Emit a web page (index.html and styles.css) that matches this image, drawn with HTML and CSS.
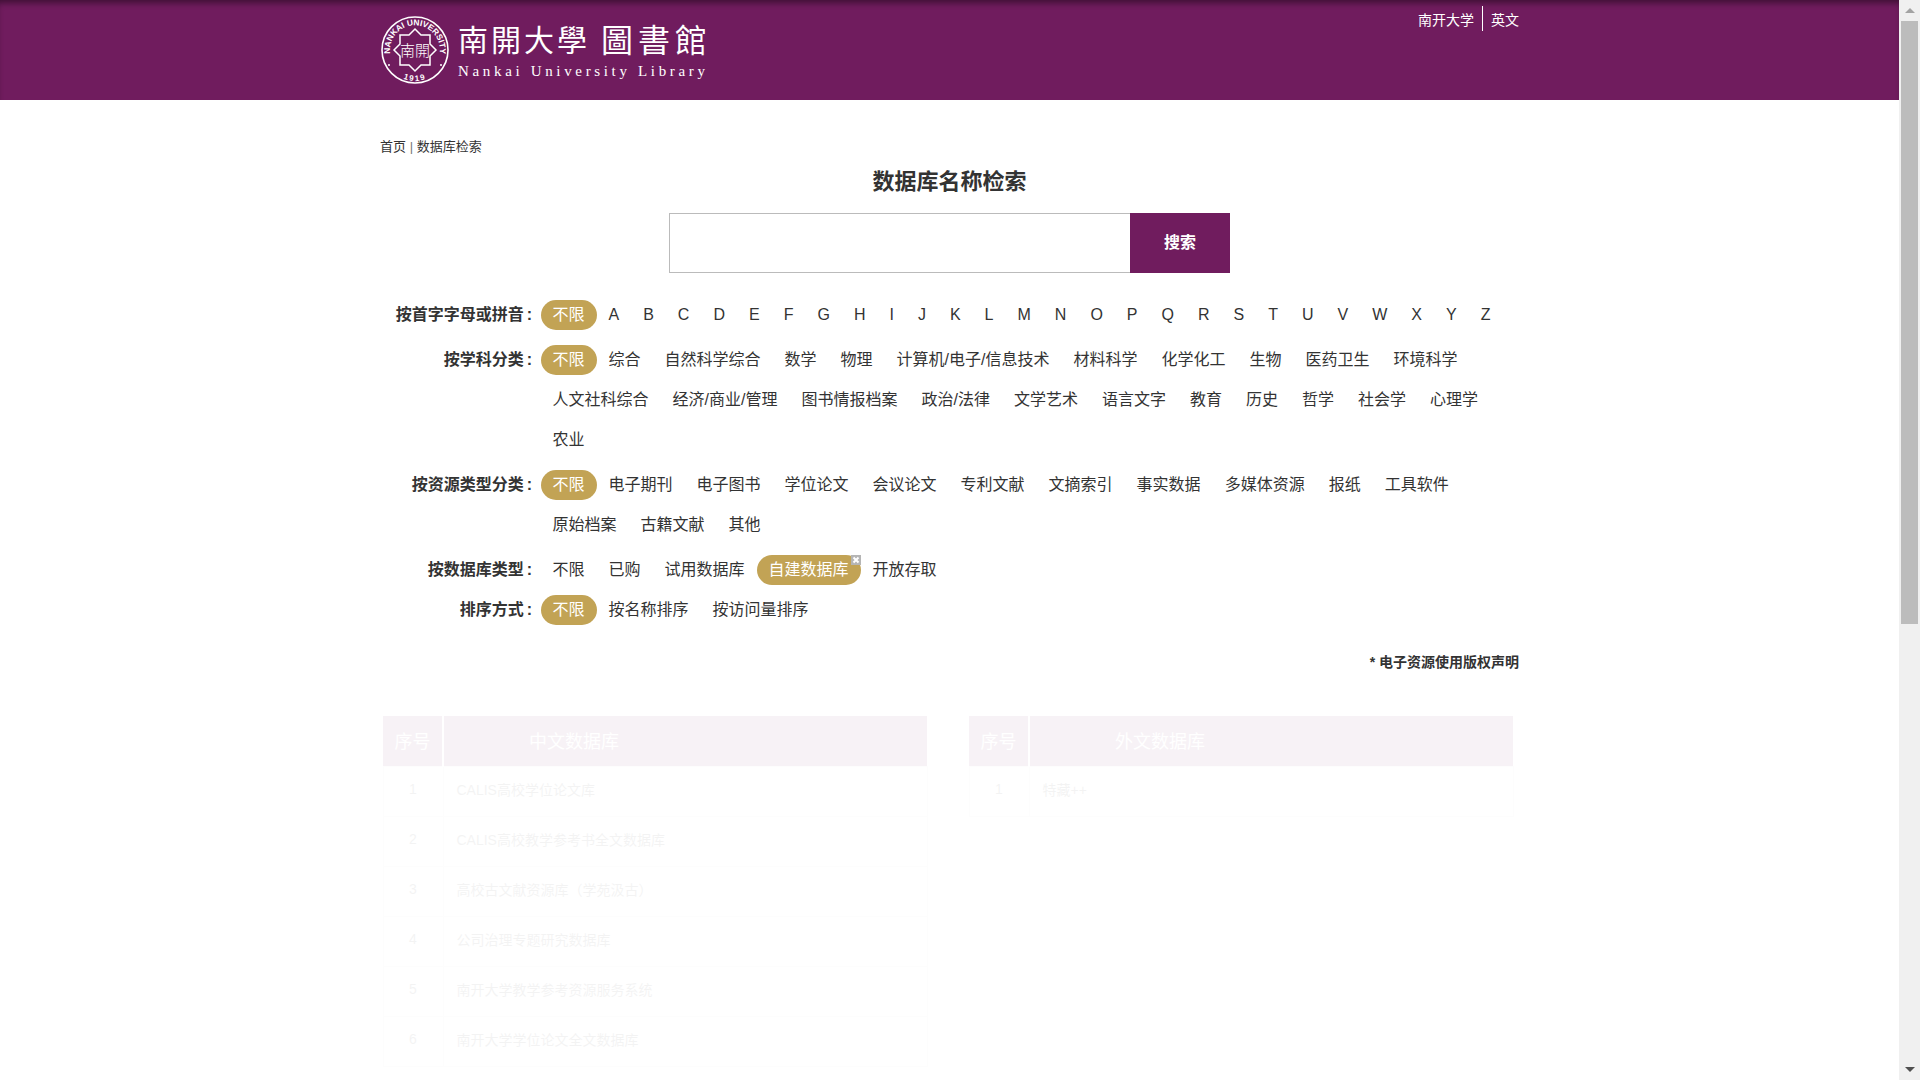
FILE: index.html
```html
<!DOCTYPE html>
<html lang="zh-CN">
<head>
    <meta charset="UTF-8">
    <meta name="viewport" content="width=device-width, initial-scale=1.0">
    <title>数据库名称检索</title>
    <link rel="stylesheet" href="styles.css">
</head>
<body>
    <div class="page">
        <header class="top-bar">
            <div class="wrap top-inner">
                <a class="logo" href="#">
                    <svg class="seal" width="70" height="70" viewBox="0 0 70 70">
                        <defs>
                            <path id="sealTop" d="M10.2 38.5 A25 25 0 1 1 59.8 38.5"/>
                            <path id="sealBottom" d="M14 57.8 A31 31 0 0 0 56 57.8"/>
                        </defs>
                        <circle cx="35" cy="35" r="33" fill="none" stroke="#fff" stroke-width="1.6"/>
                        <polygon points="35,14 41,20 50,20 50,29 56,35 50,41 50,50 41,50 35,56 29,50 20,50 20,41 14,35 20,29 20,20 29,20" fill="none" stroke="#fff" stroke-width="1.5"/>
                        <circle cx="9" cy="50" r="1" fill="#fff"/>
                        <circle cx="61" cy="50" r="1" fill="#fff"/>
                        <text class="seal-ring"><textPath href="#sealTop" startOffset="50%" text-anchor="middle">NANKAI UNIVERSITY</textPath></text>
                        <text class="seal-year"><textPath href="#sealBottom" startOffset="50%" text-anchor="middle">1919</textPath></text>
                        <text class="seal-mid" x="35" y="41" text-anchor="middle">南開</text>
                    </svg>
                    <div class="logo-text">
                        <div class="logo-cn"><span>南開大學</span><span>圖書館</span></div>
                        <div class="logo-en">Nankai University Library</div>
                    </div>
                </a>
                <div class="top-links">
                    <a href="#">南开大学</a>
                    <a href="#">英文</a>
                </div>
            </div>
        </header>

        <main class="wrap content">
            <div class="crumb"><a href="#">首页</a> <i>|</i> <a href="#">数据库检索</a></div>
            <h1 class="title">数据库名称检索</h1>
            <div class="search">
                <input class="search-input" type="text">
                <button class="search-btn">搜索</button>
            </div>

            <div class="filter">
                <div class="filter-label">按首字字母或拼音<span>:</span></div>
                <ul class="filter-list">
                    <li class="on">不限</li><li>A</li><li>B</li><li>C</li><li>D</li><li>E</li><li>F</li><li>G</li><li>H</li><li>I</li><li>J</li><li>K</li><li>L</li><li>M</li><li>N</li><li>O</li><li>P</li><li>Q</li><li>R</li><li>S</li><li>T</li><li>U</li><li>V</li><li>W</li><li>X</li><li>Y</li><li>Z</li>
                </ul>
            </div>
            <div class="filter">
                <div class="filter-label">按学科分类<span>:</span></div>
                <ul class="filter-list">
                    <li class="on">不限</li><li>综合</li><li>自然科学综合</li><li>数学</li><li>物理</li><li>计算机/电子/信息技术</li><li>材料科学</li><li>化学化工</li><li>生物</li><li>医药卫生</li><li>环境科学</li><li>人文社科综合</li><li>经济/商业/管理</li><li>图书情报档案</li><li>政治/法律</li><li>文学艺术</li><li>语言文字</li><li>教育</li><li>历史</li><li>哲学</li><li>社会学</li><li>心理学</li><li>农业</li>
                </ul>
            </div>
            <div class="filter">
                <div class="filter-label">按资源类型分类<span>:</span></div>
                <ul class="filter-list">
                    <li class="on">不限</li><li>电子期刊</li><li>电子图书</li><li>学位论文</li><li>会议论文</li><li>专利文献</li><li>文摘索引</li><li>事实数据</li><li>多媒体资源</li><li>报纸</li><li>工具软件</li><li>原始档案</li><li>古籍文献</li><li>其他</li>
                </ul>
            </div>
            <div class="filter filter-tight">
                <div class="filter-label">按数据库类型<span>:</span></div>
                <ul class="filter-list">
                    <li>不限</li><li>已购</li><li>试用数据库</li><li class="on">自建数据库<span class="close">
                        <svg width="10" height="10" viewBox="0 0 10 10"><path d="M2.5 2.5 L7.5 7.5 M7.5 2.5 L2.5 7.5" stroke="#fff" stroke-width="2"/></svg>
                    </span></li><li>开放存取</li>
                </ul>
            </div>
            <div class="filter">
                <div class="filter-label">排序方式<span>:</span></div>
                <ul class="filter-list">
                    <li class="on">不限</li><li>按名称排序</li><li>按访问量排序</li>
                </ul>
            </div>

            <div class="notice"><a href="#">* 电子资源使用版权声明</a></div>

            <!-- tables are mid fade-in in the reference -->
            <div class="tables">
                <table class="db-table">
                    <thead><tr><th>序号</th><th>中文数据库</th></tr></thead>
                    <tbody>
                        <tr><td>1</td><td>CALIS高校学位论文库</td></tr>
                        <tr><td>2</td><td>CALIS高校教学参考书全文数据库</td></tr>
                        <tr><td>3</td><td>高校古文献资源库（学苑汲古）</td></tr>
                        <tr><td>4</td><td>公司治理专题研究数据库</td></tr>
                        <tr><td>5</td><td>南开大学教学参考资源服务系统</td></tr>
                        <tr><td>6</td><td>南开大学学位论文全文数据库</td></tr>
                    </tbody>
                </table>
                <table class="db-table">
                    <thead><tr><th>序号</th><th>外文数据库</th></tr></thead>
                    <tbody>
                        <tr><td>1</td><td>特藏++</td></tr>
                    </tbody>
                </table>
            </div>
        </main>
    </div>

    <div class="scrollbar">
        <div class="arrow arrow-up"></div>
        <div class="thumb"></div>
        <div class="track"></div>
        <div class="arrow arrow-down"></div>
    </div>
</body>
</html>
```

FILE: styles.css
```css
* {
    box-sizing: border-box;
}
html, body {
    height: 100%;
}
body {
    margin: 0;
    display: flex;
    overflow: hidden;
    background-color: #fff;
    color: #333;
    font-family: "Liberation Sans", "Noto Sans CJK SC", sans-serif;
    font-size: 16px;
}
a {
    color: inherit;
    text-decoration: none;
}
.page {
    flex: 1;
    min-width: 0;
    height: 100%;
    overflow: hidden;
}
.wrap {
    width: 1139px;
    margin: 0 auto;
}

/* header */
.top-bar {
    height: 100px;
    background-color: #701c5e;
    box-shadow: inset 0 6px 6px -3px rgba(0, 0, 0, 0.45);
}
.top-inner {
    display: flex;
    justify-content: space-between;
    align-items: flex-start;
}
.logo {
    display: flex;
    margin-top: 15px;
    color: #fff;
}
.seal {
    display: block;
}
.seal-ring {
    fill: #fff;
    font-size: 8.4px;
    font-weight: bold;
}
.seal-year {
    fill: #fff;
    font-size: 8px;
    font-weight: bold;
    letter-spacing: 1.5px;
}
.seal-mid {
    fill: #fff;
    font-family: "Noto Sans CJK TC", sans-serif;
    font-size: 15px;
    font-weight: 300;
}
.logo-text {
    margin-left: 8px;
}
.logo-cn {
    display: flex;
    align-items: center;
    gap: 11px;
    height: 46px;
    font-family: "Noto Sans CJK TC", sans-serif;
    line-height: 46px;
}
.logo-cn span:first-child {
    font-size: 30px;
    letter-spacing: 3px;
}
.logo-cn span:last-child {
    font-size: 32px;
    letter-spacing: 5px;
}
.logo-en {
    font-family: "Liberation Serif", serif;
    font-size: 15px;
    letter-spacing: 3.66px;
    line-height: 20px;
}
.top-links {
    display: flex;
    align-items: center;
    height: 25px;
    margin-top: 8px;
    padding-bottom: 4px;
    color: #fff;
    font-size: 14px;
}
.top-links a:first-child {
    position: relative;
    padding-right: 9px;
    margin-right: 8px;
}
/* divider sits a little below the text line */
.top-links a:first-child::after {
    content: "";
    position: absolute;
    top: -3px;
    right: 0;
    width: 1px;
    height: 25px;
    background-color: #fff;
}

/* search */
.content {
    padding-top: 37px;
}
.crumb {
    font-size: 13px;
    line-height: 20px;
}
.crumb i {
    color: #777;
    font-style: normal;
}
.title {
    margin: 10px 0 16px;
    font-size: 22px;
    line-height: 30px;
    text-align: center;
}
.search {
    display: flex;
    width: 561px;
    height: 60px;
    margin: 0 auto 22px;
}
.search-input {
    flex: 1;
    min-width: 0;
    border: 1px solid #bbb;
    border-right: none;
    outline: none;
    background: #fff;
}
.search-btn {
    width: 100px;
    padding: 0 0 4px;
    border: none;
    background-color: #701c5e;
    color: #fff;
    font-family: inherit;
    font-size: 16px;
    font-weight: bold;
}

/* filter rows */
.filter {
    display: flex;
    margin-bottom: 5px;
}
.filter-tight {
    margin-bottom: 0;
}
.filter-label {
    width: 160.5px;
    flex: none;
    padding-right: 8.5px;
    font-weight: bold;
    line-height: 30px;
    margin-top: 5px;
    text-align: right;
}
.filter-label span {
    margin-left: 3px;
}
.filter-list {
    display: flex;
    flex-wrap: wrap;
    flex: 1;
    list-style: none;
    margin: 0;
    padding: 0;
}
.filter-list li {
    position: relative;
    height: 30px;
    margin: 5px 0;
    padding: 0 12px;
    line-height: 30px;
    white-space: nowrap;
}
.filter-list .on {
    border-radius: 15px;
    background-color: #c2a355;
    color: #fff;
}
.close {
    position: absolute;
    top: 0;
    right: 0;
    width: 10px;
    height: 10px;
    background-color: #b5b5b5;
}
.close svg {
    display: block;
}
.notice {
    margin-top: 22px;
    font-size: 14px;
    font-weight: bold;
    line-height: 20px;
    text-align: right;
}

/* database tables */
.tables {
    display: grid;
    grid-template-columns: 545px 545px;
    column-gap: 41px;
    align-items: start;
    margin-top: 44px;
    padding-left: 2.5px;
    opacity: 0.05;
}
.db-table {
    width: 100%;
    border-collapse: collapse;
    table-layout: fixed;
}
.db-table th {
    height: 50px;
    padding-bottom: 2px;
    background-color: #701c5e;
    color: #fff;
    font-size: 18px;
    font-weight: normal;
    text-align: left;
}
.db-table th:first-child {
    width: 60px;
    border-right: 2px solid #fff;
    text-align: center;
}
.db-table th:last-child {
    padding-left: 85px;
}
.db-table td {
    height: 50px;
    padding: 0 0 4px 13px;
    border: 1px solid #ddd;
    font-size: 14px;
}
.db-table td:first-child {
    padding-left: 0;
    text-align: center;
}

/* page scrollbar */
.scrollbar {
    display: flex;
    flex: none;
    flex-direction: column;
    width: 21px;
    height: 100%;
    background-color: #f0f0f0;
}
.arrow {
    display: flex;
    flex: none;
    align-items: center;
    justify-content: center;
    height: 21px;
}
.arrow::before {
    content: "";
    border-left: 5px solid transparent;
    border-right: 5px solid transparent;
}
.arrow-up::before {
    border-bottom: 5px solid #a3a3a3;
}
.arrow-down::before {
    border-top: 5px solid #505050;
}
.thumb {
    flex: none;
    height: 603px;
    margin: 0 2px;
    background-color: #bcbcbc;
}
.track {
    flex: 1;
}
```
